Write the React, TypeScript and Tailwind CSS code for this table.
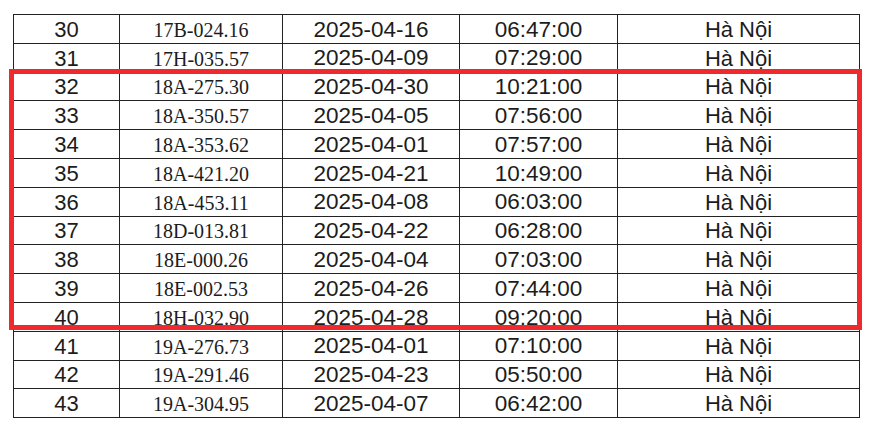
const rows = [
  ["30", "17B-024.16", "2025-04-16", "06:47:00"],
  ["31", "17H-035.57", "2025-04-09", "07:29:00"],
  ["32", "18A-275.30", "2025-04-30", "10:21:00"],
  ["33", "18A-350.57", "2025-04-05", "07:56:00"],
  ["34", "18A-353.62", "2025-04-01", "07:57:00"],
  ["35", "18A-421.20", "2025-04-21", "10:49:00"],
  ["36", "18A-453.11", "2025-04-08", "06:03:00"],
  ["37", "18D-013.81", "2025-04-22", "06:28:00"],
  ["38", "18E-000.26", "2025-04-04", "07:03:00"],
  ["39", "18E-002.53", "2025-04-26", "07:44:00"],
  ["40", "18H-032.90", "2025-04-28", "09:20:00"],
  ["41", "19A-276.73", "2025-04-01", "07:10:00"],
  ["42", "19A-291.46", "2025-04-23", "05:50:00"],
  ["43", "19A-304.95", "2025-04-07", "06:42:00"],
];

const cell = "flex items-center justify-center border-r border-b border-[#222] pt-[2px]";

export default function App() {
  return (
    <div className="relative h-[431px] w-[871px] bg-white pl-[13px] pt-[14px] text-[#1c1c1c]">
      <div className="w-[847px] border-l border-t border-[#222]">
        {rows.map(([no, plate, date, time]) => (
          <div key={no} className="grid h-[28.8px] grid-cols-[106px_163px_177px_158px_242px] leading-none">
            <div className={`${cell} font-['Liberation_Sans',Arial,sans-serif] text-[22px]`}>{no}</div>
            <div className={`${cell} font-['Liberation_Serif','Times_New_Roman',serif] text-[20px]`}>{plate}</div>
            <div className={`${cell} font-['Liberation_Sans',Arial,sans-serif] text-[22.5px]`}>{date}</div>
            <div className={`${cell} font-['Liberation_Sans',Arial,sans-serif] text-[22.5px]`}>{time}</div>
            <div className={`${cell} font-['Liberation_Sans',Arial,sans-serif] text-[22px]`}>Hà Nội</div>
          </div>
        ))}
      </div>
      <div className="pointer-events-none absolute left-[9px] top-[69px] h-[261px] w-[853px] border-[5px] border-[#ee2a2f]" />
    </div>
  );
}
